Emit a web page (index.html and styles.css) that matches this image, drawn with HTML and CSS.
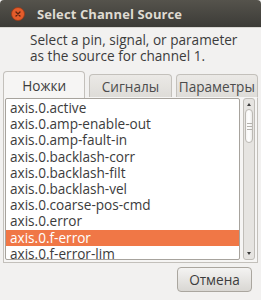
FILE: index.html
```html
<!DOCTYPE html>
<html>
<head>
<meta charset="utf-8">
<link rel="stylesheet" href="styles.css">
</head>
<body>
<div class="window">
  <div class="titlebar">
    <span class="close"><svg width="14" height="14" viewBox="0 0 14 14"><circle cx="7" cy="7" r="6.5" fill="#e45c2b" stroke="#9c3a17" stroke-width="0.8"/><path d="M5 5 L9 9 M9 5 L5 9" stroke="#5a2310" stroke-width="1.3" stroke-linecap="round"/></svg></span>
    <span class="title">Select Channel Source</span>
  </div>
  <div class="body">
    <p class="prompt">Select a pin, signal, or parameter<br>as the source for channel 1.</p>
    <div class="notebook">
      <div class="tabs">
        <div class="tab active">Ножки</div>
        <div class="tab">Сигналы</div>
        <div class="tab">Параметры</div>
      </div>
      <div class="page">
        <div class="list">
          <div class="row">axis.0.active</div>
          <div class="row">axis.0.amp-enable-out</div>
          <div class="row">axis.0.amp-fault-in</div>
          <div class="row">axis.0.backlash-corr</div>
          <div class="row">axis.0.backlash-filt</div>
          <div class="row">axis.0.backlash-vel</div>
          <div class="row">axis.0.coarse-pos-cmd</div>
          <div class="row">axis.0.error</div>
          <div class="row selected">axis.0.f-error</div>
          <div class="row">axis.0.f-error-lim</div>
        </div>
        <div class="scrollbar">
          <div class="arrow up"></div>
          <div class="trough"><div class="thumb"><span></span><span></span><span></span></div></div>
          <div class="arrow down"></div>
        </div>
      </div>
    </div>
    <div class="actions">
      <button class="btn">Отмена</button>
    </div>
  </div>
</div>
</body>
</html>
```
FILE: styles.css
```css
* { box-sizing: border-box; }
html, body { margin: 0; padding: 0; background: #f2f1f0; }
body { width: 261px; height: 300px; overflow: hidden; font-family: "Open Sans", "DejaVu Sans", sans-serif; }
.window { width: 261px; height: 300px; display: flex; flex-direction: column; }
.titlebar {
  height: 27px; flex: none;
  background: linear-gradient(#55534c, #3c3b37);
  display: flex; align-items: center; padding-left: 11px;
  border-radius: 4px 4px 0 0;
}
.close { width: 14px; height: 14px; display: flex; }
.title { margin-left: 12px; color: #dfdbd2; font-weight: bold; font-size: 13px; letter-spacing: 0.1px; }
.body { flex: 1; display: flex; flex-direction: column; padding: 0 3px; border-top: 1px solid #d8d6d2; }
.prompt { margin: 4px 0 0 27px; color: #3c3c3c; font-size: 13.6px; line-height: 16px; white-space: nowrap; }
.notebook { margin-top: 7px; }
.tabs { display: flex; gap: 4px; height: 26px; align-items: flex-end; position: relative; z-index: 1; }
.tab {
  flex: 1; height: 23px; display: flex; align-items: center; justify-content: center;
  font-size: 13.6px; color: #4c4c4c;
  background: linear-gradient(#ebe9e6, #dedcd8);
  border: 1px solid #c3c0bb; border-bottom: none; border-radius: 4px 4px 0 0;
  white-space: nowrap;
}
.tab.active { height: 27px; background: #f6f5f4; color: #3c3c3c; margin-bottom: -1px; }
.page {
  height: 166px; border: 1px solid #c3c0bb; border-top-color: transparent; background: #f6f5f4;
  display: flex; padding: 0 2px 2px 1px; gap: 3px;
}
.list {
  flex: 1; background: #fff; border: 1px solid #a7a39d; border-radius: 2px;
  overflow: hidden; padding-top: 1px;
}
.row { height: 16.2px; line-height: 16px; padding-left: 4px; font-size: 13.6px; color: #3c3c3c; white-space: nowrap; }
.row.selected { background: #f07746; color: #fff; }
.scrollbar {
  width: 12px; border: 1px solid #c0bdb8; border-radius: 3px; background: #e6e4e1;
  display: flex; flex-direction: column;
}
.arrow { height: 10px; position: relative; }
.arrow::after { content: ""; position: absolute; left: 3px; border-left: 2px solid transparent; border-right: 2px solid transparent; }
.arrow.up::after { top: 4px; border-bottom: 3px solid #3c3c3c; }
.arrow.down::after { top: 3px; border-top: 3px solid #3c3c3c; }
.trough { flex: 1; padding: 0 1px; }
.thumb {
  height: 34px; border: 1px solid #bcb9b4; border-radius: 5px; background: linear-gradient(90deg, #f6f5f4, #ffffff, #ecebe9);
  display: flex; flex-direction: column; align-items: center; justify-content: center; gap: 2px;
}
.thumb span { width: 5px; height: 1px; background: #b5b2ad; }
.actions { display: flex; justify-content: flex-end; padding: 4px 6px 0 0; }
.btn {
  width: 75px; height: 25px; font-family: inherit; font-size: 13.6px; color: #3c3c3c;
  background: linear-gradient(#f4f3f2, #d9d7d3); border: 1px solid #aaa69f; border-radius: 4px;
}
```
